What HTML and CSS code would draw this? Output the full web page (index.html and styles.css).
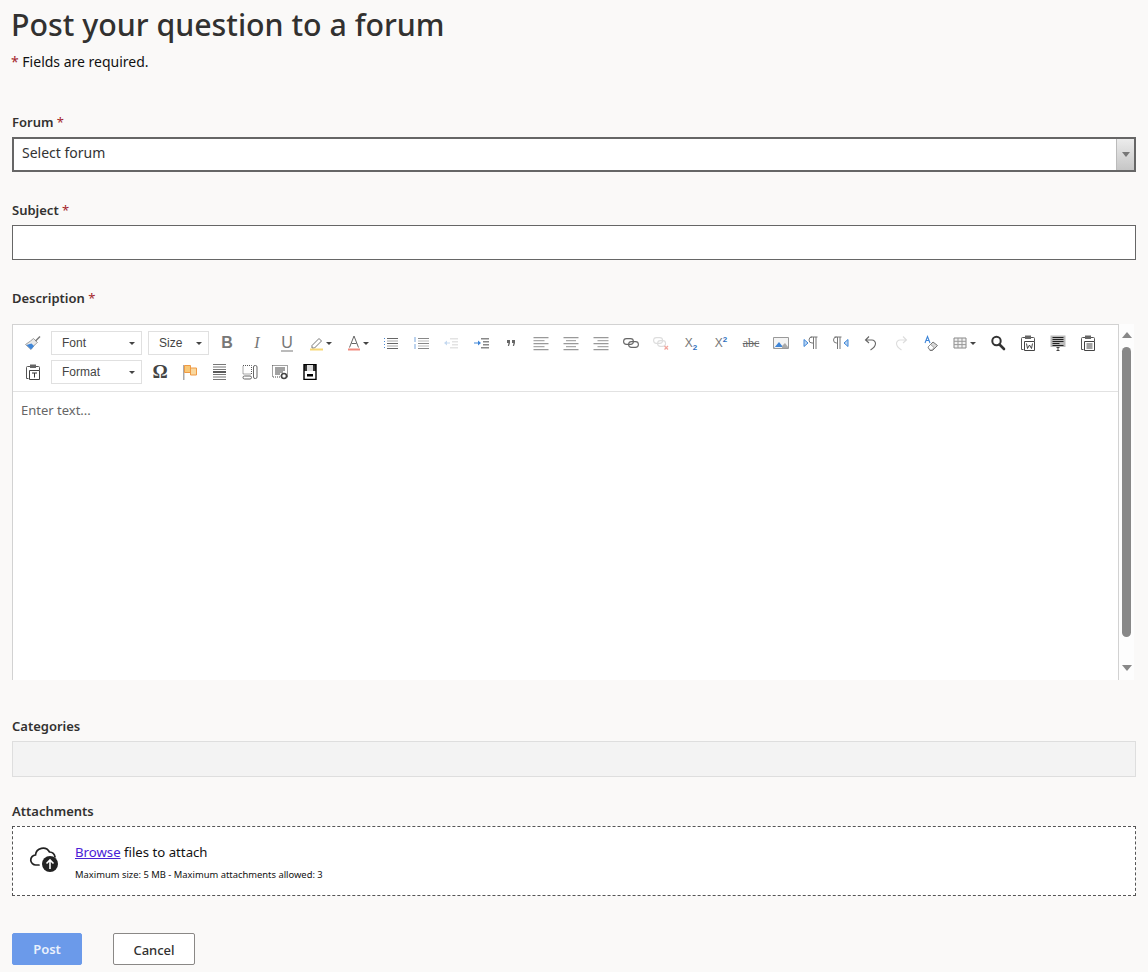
FILE: index.html
```html
<!DOCTYPE html>
<html lang="en">
<head>
<meta charset="utf-8">
<title>Post your question to a forum</title>
<link rel="stylesheet" href="styles.css">
</head>
<body>
<main class="page">
  <h1 class="title">Post your question to a forum</h1>
  <p class="note"><span class="req">*</span> Fields are required.</p>

  <div class="field field-forum">
    <label class="label">Forum <span class="req">*</span></label>
    <div class="select"><span class="select-text">Select forum</span><span class="select-btn"><i class="select-arrow"></i></span></div>
  </div>

  <div class="field field-subject">
    <label class="label">Subject <span class="req">*</span></label>
    <div class="input"></div>
  </div>

  <div class="field field-desc">
    <label class="label">Description <span class="req">*</span></label>
    <div class="editor-wrap">
      <div class="editor">
        <div class="toolbar">
          <div class="tb-row">
            <span class="tb"><svg viewBox="0 0 16 16"><path d="M8.500 3.500l4 4-2 1.500-4.500 5.500L.500 9.500l5-3.500z" fill="#e8e8e8" stroke="#8c8c8c" stroke-width=".8"/><path d="M1.500 10l4.500 4.500 3-3.500-2.500-2.500z" fill="#3f86d8"/><path d="M10 5.500l4.500-4.500 1 1-4.500 4.500z" fill="#777"/></svg></span>
            <span class="combo combo-font"><span class="combo-text">Font</span><i class="caret"></i></span>
            <span class="combo combo-size"><span class="combo-text">Size</span><i class="caret"></i></span>
            <span class="tb tb-after"><b class="glyph glyph-b">B</b></span>
            <span class="tb"><i class="glyph glyph-i">I</i></span>
            <span class="tb"><span class="glyph glyph-u">U</span></span>
            <span class="tb tb-caret"><svg viewBox="0 0 16 16"><path d="M3 10.500l7-7 2.500 2.500-7 7H3z" fill="#fff" stroke="#777"/><path d="M1 13.500h13v2H1z" fill="#f7d774"/></svg><i class="caret caret-tb"></i></span>
            <span class="tb tb-caret"><svg viewBox="0 0 16 16"><path d="M3.500 12.500L8 1l4.500 11.500M5.500 8.500h5" fill="none" stroke="#666"/><path d="M2 13.500h12v2H2z" fill="#f08a7e"/></svg><i class="caret caret-tb"></i></span>
            <span class="tb"><svg viewBox="0 0 16 16"><path d="M4 3h11v1H4zM4 8h11v1H4zM4 13h11v1H4z" fill="#666"/><path d="M4 5.500h11v1H4zM4 10.500h11v1H4z" fill="#aaa"/><path d="M1 3h1v1H1zM1 6h1v1H1zM1 9h1v1H1zM1 12h1v1H1z" fill="#4a8ad4"/></svg></span>
            <span class="tb"><svg viewBox="0 0 16 16"><path d="M5 3h11v1H5zM5 8h11v1H5zM5 13h11v1H5z" fill="#888"/><path d="M5 5.500h11v1H5zM5 10.500h11v1H5z" fill="#bbb"/><path d="M1.500 2h1v5h-1zM1.500 9h1v5h-1z" fill="#7aa7dd"/></svg></span>
            <span class="tb"><svg viewBox="0 0 16 16"><path d="M7 3h8v1.500H7zM9 6h6v1.500H9zM9 9h6v1.500H9zM7 12h8v1.500H7z" fill="#e3e3e3"/><path d="M1 8l3-2.500v2h3v1H4v2z" fill="#c5d9f0"/></svg></span>
            <span class="tb"><svg viewBox="0 0 16 16"><path d="M8 3h8v1.500H8zM10 6h6v1.500h-6zM10 9h6v1.500h-6zM8 12h8v1.500H8z" fill="#888"/><path d="M8 8L5 5.500v2H1v1h4v2z" fill="#3f86d8"/></svg></span>
            <span class="tb"><svg viewBox="0 0 16 16"><path d="M4 5h3v3L6 11H4.800L5.500 8H4zM9 5h3v3l-1 3H9.800l.7-3H9z" fill="#666"/></svg></span>
            <span class="tb"><svg viewBox="0 0 16 16"><path d="M.5 2h15v1.200H.5zM.5 8h15v1.200H.5zM.5 14h15v1.200H.5z" fill="#999"/><path d="M.5 5h11v1.200H.5zM.5 11h11v1.200H.5z" fill="#aaa"/></svg></span>
            <span class="tb"><svg viewBox="0 0 16 16"><path d="M.5 2h15v1.200H.5zM.5 8h15v1.200H.5zM.5 14h15v1.200H.5z" fill="#999"/><path d="M3 5h10v1.200H3zM3 11h10v1.200H3z" fill="#aaa"/></svg></span>
            <span class="tb"><svg viewBox="0 0 16 16"><path d="M.5 2h15v1.200H.5zM.5 8h15v1.200H.5zM.5 14h15v1.200H.5z" fill="#999"/><path d="M4.500 5h11v1.200h-11zM4.500 11h11v1.200h-11z" fill="#aaa"/></svg></span>
            <span class="tb"><svg viewBox="0 0 16 16"><rect x=".6" y="3.600" width="9.800" height="5.800" rx="2.900" fill="none" stroke="#666" stroke-width="1.100"/><rect x="5.600" y="6.600" width="9.800" height="5.800" rx="2.900" fill="none" stroke="#666" stroke-width="1.100"/></svg></span>
            <span class="tb"><svg viewBox="0 0 16 16"><rect x=".6" y="2.600" width="9" height="5.800" rx="2.900" fill="none" stroke="#ddd" stroke-width="1.100"/><rect x="4.600" y="5.600" width="8" height="5.800" rx="2.900" fill="none" stroke="#ddd" stroke-width="1.100"/><path d="M11.500 11l3.500 3.500m0-3.500l-3.500 3.500" stroke="#f2a49b" stroke-width="1.200"/></svg></span>
            <span class="tb"><span class="glyph-x">X<sub class="mark">2</sub></span></span>
            <span class="tb"><span class="glyph-x">X<sup class="mark">2</sup></span></span>
            <span class="tb"><s class="glyph-s">abc</s></span>
            <span class="tb"><svg viewBox="0 0 16 16"><path d="M.5 2.500h15v11H.5z" fill="#f4f4f4" stroke="#999"/><path d="M1 13l5-6 4 5H1z" fill="#3f86d8"/><path d="M9 11l3-3 3 4v1H9z" fill="#aaa"/></svg></span>
            <span class="tb"><svg viewBox="0 0 16 16"><path d="M1 4.500l4 3.500-4 3.500z" fill="#bcd6f2" stroke="#3f86d8"/><path d="M7.500 2h7M10.500 2v12M13 2v12M10.500 8H9a3 3 0 010-6" fill="none" stroke="#777"/></svg></span>
            <span class="tb"><svg viewBox="0 0 16 16"><path d="M1.500 2h7M4.500 2v12M7 2v12M4.500 8H3.500a3 3 0 010-6" fill="none" stroke="#777"/><path d="M15 4.500L11 8l4 3.500z" fill="#bcd6f2" stroke="#3f86d8"/></svg></span>
            <span class="tb"><svg viewBox="0 0 16 16"><path d="M6 1.500L2.500 5 6 8M3 5h6a3.500 3.500 0 013.500 3.500c0 2.500-2.500 5-5 6.500" fill="none" stroke="#666" stroke-width="1.100"/></svg></span>
            <span class="tb"><svg viewBox="0 0 16 16"><path d="M10 1.500L13.500 5 10 8M13 5H7A3.500 3.500 0 003.500 8.500c0 2.500 2.500 5 5 6.500" fill="none" stroke="#ddd" stroke-width="1.100"/></svg></span>
            <span class="tb"><svg viewBox="0 0 16 16"><path d="M2 8l2.500-6.500L7 8M3 5.500h3" fill="none" stroke="#3f86d8" stroke-width="1.100"/><path d="M5 12l5-5 4.500 3.500-5 5H7z" fill="#d8d8d8" stroke="#777"/><path d="M5 12l2.500-2.500 3.500 3-2 2.500H7z" fill="#fff" stroke="#777" stroke-width=".6"/></svg></span>
            <span class="tb tb-caret tb-table"><svg viewBox="0 0 16 16"><path d="M1 3h12v10H1z" fill="#f2f2f2" stroke="#888"/><path d="M1 6.300h12M1 9.600h12M5 3v10M9 3v10" stroke="#999"/></svg><i class="caret caret-tb"></i></span>
            <span class="tb"><svg viewBox="0 0 16 16"><circle cx="6.500" cy="6" r="4.200" fill="none" stroke="#333" stroke-width="2"/><path d="M9.500 9.500l4.500 4.500" stroke="#333" stroke-width="2.600" stroke-linecap="round"/></svg></span>
            <span class="tb"><svg viewBox="0 0 16 16"><path d="M5 2.500H2.500a1 1 0 00-1 1v11h2M11 2.500h2.500a1 1 0 011 1v3" fill="none" stroke="#555"/><path d="M5 .5h6v3.500H5z" fill="#666"/><path d="M4.500 6.500h10v9h-10z" fill="#fff" stroke="#444"/><path d="M6.500 8.500l1 5 2-3.500 2 3.500 1-5" fill="none" stroke="#333" stroke-width=".9"/></svg></span>
            <span class="tb"><svg viewBox="0 0 16 16"><path d="M.5 .5h15v11.500H.5z" fill="#bbb"/><path d="M2.500 2.500h11M2.500 4.500h11M2.500 6.500h11M2.500 8.500h7M2.500 10.500h11" stroke="#222"/><path d="M6.500 12.500h3M6.500 15.500h3M8 12.500v3" stroke="#444"/></svg></span>
            <span class="tb"><svg viewBox="0 0 16 16"><path d="M5 2.500H2.500a1 1 0 00-1 1v11h2M11 2.500h2.500a1 1 0 011 1v3" fill="none" stroke="#555"/><path d="M5 .5h6v3.500H5z" fill="#666"/><path d="M4.500 6.500h10v9h-10z" fill="#fff" stroke="#444"/><path d="M6.500 9h6M6.500 11h6M6.500 13h6" stroke="#444"/></svg></span>
          </div>
          <div class="tb-row">
            <span class="tb"><svg viewBox="0 0 16 16"><path d="M5 2.500H2.500a1 1 0 00-1 1v11h2M11 2.500h2.500a1 1 0 011 1v3" fill="none" stroke="#555"/><path d="M5 .5h6v3.500H5z" fill="#666"/><path d="M4.500 6.500h10v9h-10z" fill="#fff" stroke="#444"/><path d="M7 9h5M9.500 9v4.500" stroke="#333"/></svg></span>
            <span class="combo combo-font"><span class="combo-text">Format</span><i class="caret"></i></span>
            <span class="tb tb-after"><span class="glyph-omega">Ω</span></span>
            <span class="tb"><svg viewBox="0 0 16 16"><path d="M1 1h1.500v15H1z" fill="#aaa"/><path d="M2.500 1.500h6v7h-6z" fill="#f9c877" stroke="#ef9a44"/><path d="M8.500 4h6v7h-6z" fill="#f9d89f" stroke="#ef9a44"/></svg></span>
            <span class="tb"><svg viewBox="0 0 16 16"><path d="M1 .5h13M1 3h13M1 5.500h13M1 10.500h13M1 13h13M1 15.500h13" stroke="#777"/><path d="M1 7.200h13v1.600H1z" fill="#333"/></svg></span>
            <span class="tb"><svg viewBox="0 0 16 16"><path d="M1 1.500h8.500v8.500H1z" fill="none" stroke="#555" stroke-dasharray="1 1"/><rect x="11.500" y="1.500" width="3.500" height="13" rx="1.500" fill="#fff" stroke="#666"/><rect x="1" y="12" width="8.500" height="3" rx="1.500" fill="#fff" stroke="#666"/></svg></span>
            <span class="tb"><svg viewBox="0 0 16 16"><path d="M.5 1.500h15V13H.5z" fill="none" stroke="#444" stroke-dasharray="1 1"/><path d="M3 4h10M3 6h10M3 8h8M3 10h5" stroke="#444"/><circle cx="12" cy="12" r="2.500" fill="#fff" stroke="#444" stroke-width="1.500"/><path d="M8.500 12h1M14.500 12h1" stroke="#444"/></svg></span>
            <span class="tb"><svg viewBox="0 0 16 16"><path d="M2 .5h12v15H2z" fill="#fff" stroke="#000" stroke-width="1.400"/><path d="M5 1h6v6H5z" fill="#ddd"/><path d="M5 10h6v2.500H5z" fill="#000"/><path d="M2 1h3v6H2zM11 1h3v6h-3z" fill="#000" opacity=".8"/></svg></span>
          </div>
        </div>
        <div class="editor-body">Enter text...</div>
      </div>
      <div class="scrollbar">
        <i class="sb-up"></i>
        <i class="sb-thumb"></i>
        <i class="sb-down"></i>
      </div>
    </div>
  </div>

  <div class="field field-cat">
    <label class="label">Categories</label>
    <div class="categories"></div>
  </div>

  <div class="field field-att">
    <label class="label">Attachments</label>
    <div class="dropzone">
      <svg class="cloud" viewBox="0 0 32 32"><path d="M10 22H7a5 5 0 01-.5-10A7.500 7.500 0 0120.500 9a6 6 0 015.500 5" fill="none" stroke="#222" stroke-width="1.700" stroke-linecap="round"/><circle cx="21" cy="21" r="8" fill="#222"/><path d="M21 26v-9M17.500 20.500L21 17l3.500 3.500" fill="none" stroke="#fff" stroke-width="1.600"/></svg>
      <div class="drop-text">
        <div class="drop-main"><a class="browse" href="#">Browse</a> files to attach</div>
        <div class="drop-sub">Maximum size: 5 MB - Maximum attachments allowed: 3</div>
      </div>
    </div>
  </div>

  <div class="actions">
    <button class="btn btn-post" type="button">Post</button>
    <button class="btn btn-cancel" type="button">Cancel</button>
  </div>
</main>
</body>
</html>
```
FILE: styles.css
```css
* { box-sizing: border-box; }
html, body { margin: 0; padding: 0; }
body {
  background: #faf9f8;
  font-family: "Noto Sans", "Open Sans", sans-serif;
  color: #323130;
  overflow: hidden;
  height: 972px;
}
.page { padding: 0 12px; }
.title {
  margin: 0;
  margin-left: -1px;
  font-size: 30.3px;
  line-height: 50px;
  font-weight: 500;
  color: #323130;
}
.note { margin: 0; font-size: 14px; line-height: 24px; color: #111; margin-left: -1px; }
.req { color: #a4262c; font-weight: 400; }
.label {
  display: block;
  font-size: 13px;
  font-weight: 600;
  line-height: 20px;
  color: #323130;
}
.field-forum { margin-top: 38px; }
.field-subject { margin-top: 28px; }
.field-desc { margin-top: 28px; }
.field-cat { margin-top: 36px; }
.field-att { margin-top: 24px; }
.field-forum .label, .field-subject .label, .field-cat .label, .field-att .label { margin-bottom: 5px; }
.field-desc .label { margin-bottom: 16px; }
.select {
  height: 35px;
  background: #fff;
  border: 2px solid #666;
  display: flex;
  align-items: stretch;
  justify-content: space-between;
}
.select-text { padding-left: 8px; font-size: 14px; line-height: 27px; color: #333; }
.select-btn {
  width: 18px;
  background: linear-gradient(#ececec, #c6c6c6);
  border-left: 1px solid #bbb;
  display: flex;
  align-items: center;
  justify-content: center;
}
.select-arrow {
  border-left: 4px solid transparent;
  border-right: 4px solid transparent;
  border-top: 5px solid #777;
}
.input { height: 35px; background: #fff; border: 1px solid #666; }
.editor-wrap { display: flex; height: 356px; overflow: hidden; }
.editor {
  width: 1107px;
  background: #fff;
  border: 1px solid #d2d2d2;
  border-bottom: 0;
  display: flex;
  flex-direction: column;
}
.toolbar {
  height: 67px;
  padding: 6px 0 0 5px;
  border-bottom: 1px solid #e2e2e2;
  display: flex;
  flex-direction: column;
  gap: 5px;
}
.tb-row { display: flex; align-items: center; height: 24px; }
.tb {
  width: 30px;
  height: 24px;
  flex: none;
  display: flex;
  align-items: center;
  justify-content: center;
}
.tb svg { width: 16px; height: 16px; flex: none; display: block; }
.tb-after { margin-left: 3px; }
.tb-caret { width: 37px; justify-content: flex-start; padding-left: 7px; gap: 1px; }
.combo {
  flex: none;
  height: 24px;
  margin-left: 3px;
  border: 1px solid #e0e0e0;
  background: #fff;
  display: flex;
  align-items: center;
  justify-content: space-between;
  padding: 0 6px 0 10px;
  font-family: "Liberation Sans", Arial, sans-serif;
  font-size: 12px;
  color: #444;
}
.combo-font { width: 91px; }
.combo-size { width: 61px; margin-left: 6px; }
.caret {
  border-left: 3.500px solid transparent;
  border-right: 3.500px solid transparent;
  border-top: 3.500px solid #444;
}
.caret-tb { flex: none; }
.glyph { font-family: "Liberation Sans", Arial, sans-serif; font-size: 16px; color: #777; line-height: 1; }
.glyph-i { font-family: "Liberation Serif", serif; font-weight: 400; }
.glyph-u { border-bottom: 2px solid #bbb; font-weight: 400; line-height: 15px; }
.glyph-x { font-family: "Liberation Sans", Arial, sans-serif; font-size: 12px; color: #777; line-height: 1; }
.mark { font-size: 8px; color: #2e6fc0; font-weight: 700; line-height: 0; }
.glyph-s { font-family: "Liberation Serif", serif; font-size: 12px; color: #666; }
.glyph-omega { font-family: "Liberation Serif", serif; font-size: 19px; font-weight: 700; color: #444; }
.editor-body {
  flex: 1;
  padding: 9px 8px;
  font-size: 13px;
  line-height: 18px;
  color: #666;
}
.scrollbar {
  width: 15px;
  background: #fdfdfd;
  display: flex;
  flex-direction: column;
  align-items: center;
  padding-top: 8px;
}
.sb-up {
  border-left: 5px solid transparent;
  border-right: 5px solid transparent;
  border-bottom: 6px solid #888;
}
.sb-thumb {
  width: 9px;
  height: 290px;
  margin-top: 9px;
  background: #888;
  border-radius: 5px;
}
.sb-down {
  margin-top: 28px;
  border-left: 5px solid transparent;
  border-right: 5px solid transparent;
  border-top: 6px solid #888;
}
.categories { height: 36px; background: #f3f3f3; border: 1px solid #dedede; }
.dropzone {
  height: 70px;
  background: #fff;
  border: 1px dashed #555;
  display: flex;
  align-items: center;
  padding-left: 16px;
  gap: 14px;
}
.cloud { width: 32px; height: 32px; flex: none; margin-top: -5px; }
.drop-text { margin-top: 2px; }
.drop-main { font-size: 13.2px; line-height: 20px; color: #111; }
.browse { color: #4a21d6; text-decoration: underline; }
.drop-sub { font-size: 9.400px; line-height: 14px; margin-top: 6px; color: #111; }
.actions { margin-top: 37px; display: flex; gap: 31px; }
.btn {
  height: 32px;
  font-family: inherit;
  font-size: 13px;
  font-weight: 600;
  border-radius: 2px;
  padding: 0;
}
.btn-post { width: 70px; background: #6b9aea; border: 1px solid #6b9aea; color: #eaf1fc; }
.btn-cancel { width: 82px; background: #fff; border: 1px solid #8a8886; color: #323130; font-weight: 500; padding-top: 2px; }
```
